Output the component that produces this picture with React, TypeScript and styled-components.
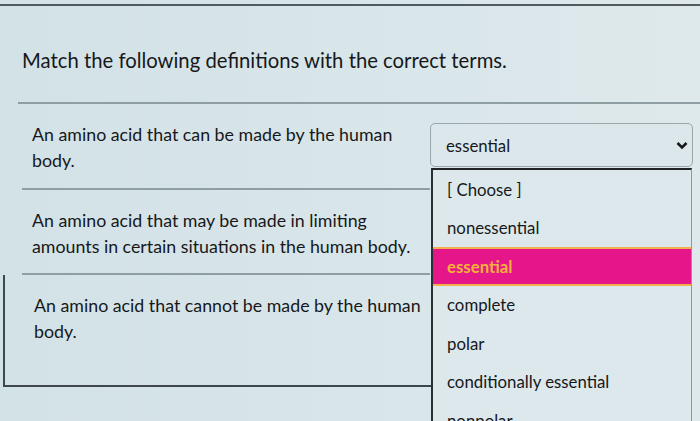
import styled, { createGlobalStyle } from "styled-components";

const GlobalStyle = createGlobalStyle`
  html, body {
    margin: 0;
    padding: 0;
    background: #d7e5e9;
    overflow: hidden;
  }
  body {
    font-family: Lato, "Open Sans", "Liberation Sans", sans-serif;
    color: #16181a;
  }
`;

const Page = styled.div`
  position: relative;
  width: 700px;
  height: 421px;
  overflow: hidden;
  background: linear-gradient(90deg, #d3e2e7 0%, #d9e6ea 60%, #dfe9ec 100%);
`;

const TopRule = styled.div`
  height: 4px;
  border-bottom: 2px solid #505a5f;
`;

const Title = styled.h2`
  margin: 0;
  padding: 40px 0 0 22px;
  height: 96px;
  box-sizing: border-box;
  font-size: 20.3px;
  font-weight: 400;
  line-height: 28px;
`;

const Divider = styled.div`
  margin-left: 18px;
  border-top: 2px solid #8f9ea3;
`;

const Questions = styled.div`
  display: flex;
  flex-direction: column;
`;

const Row = styled.div<{ $last?: boolean }>`
  display: grid;
  grid-template-columns: 430px 1fr;
  ${(p) => (p.$last ? "margin-left: 3px; border-left: 2px solid #3e474b;" : "")}
`;

const Definition = styled.div<{ $height: number; $last?: boolean }>`
  margin-left: ${(p) => (p.$last ? "0" : "22px")};
  padding: 17px 0 0 ${(p) => (p.$last ? "29px" : "10px")};
  height: ${(p) => p.$height}px;
  box-sizing: border-box;
  font-size: 17.8px;
  line-height: 26px;
  border-bottom: 2px solid ${(p) => (p.$last ? "#3e474b" : "#8f9ea3")};
`;

const SelectCell = styled.div`
  position: relative;
  padding-top: 19px;
`;

const Select = styled.div`
  display: flex;
  align-items: center;
  justify-content: space-between;
  width: 263px;
  height: 44px;
  box-sizing: border-box;
  padding: 0 4px 0 15px;
  border: 1px solid #9aa6ab;
  border-radius: 5px;
  background: #dbe7eb;
  font-size: 16.8px;
`;

const Menu = styled.ul`
  position: absolute;
  top: 168px;
  left: 431px;
  width: 261px;
  margin: 0;
  padding: 0;
  list-style: none;
  background: #dce8ec;
  border-top: 2px solid #1f2326;
  border-left: 2px solid #2a2f33;
  border-right: 1px solid #8d999e;
  box-sizing: border-box;
`;

const Option = styled.li<{ $active?: boolean }>`
  height: 38.5px;
  display: flex;
  align-items: center;
  padding-left: 14px;
  font-size: 16.8px;
  background: ${(p) => (p.$active ? "#e5168a" : "transparent")};
  color: ${(p) => (p.$active ? "#f6b13a" : "#16181a")};
  font-weight: ${(p) => (p.$active ? 700 : 400)};
  box-shadow: ${(p) =>
    p.$active ? "inset 0 2px 0 #f3b04a, inset 0 -2px 0 #f3b04a" : "none"};
`;

const Chevron = () => (
  <svg width="12" height="9" viewBox="0 0 12 9">
    <path d="M1.5 2 L6 6.5 L10.5 2" fill="none" stroke="#16181a" strokeWidth="2.6" />
  </svg>
);

const options = [
  "[ Choose ]",
  "nonessential",
  "essential",
  "complete",
  "polar",
  "conditionally essential",
  "nonpolar",
];

export default function App() {
  return (
    <Page>
      <GlobalStyle />
      <TopRule />
      <Title>Match the following definitions with the correct terms.</Title>
      <Divider />
      <Questions>
        <Row>
          <Definition $height={86}>
            An amino acid that can be made by the human
            <br />
            body.
          </Definition>
          <SelectCell>
            <Select>
              essential
              <Chevron />
            </Select>
          </SelectCell>
        </Row>
        <Row>
          <Definition $height={85}>
            An amino acid that may be made in limiting
            <br />
            amounts in certain situations in the human body.
          </Definition>
          <SelectCell />
        </Row>
        <Row $last>
          <Definition $height={112} $last>
            An amino acid that cannot be made by the human
            <br />
            body.
          </Definition>
          <SelectCell />
        </Row>
      </Questions>
      <Menu>
        {options.map((o) => (
          <Option key={o} $active={o === "essential"}>
            {o}
          </Option>
        ))}
      </Menu>
    </Page>
  );
}
